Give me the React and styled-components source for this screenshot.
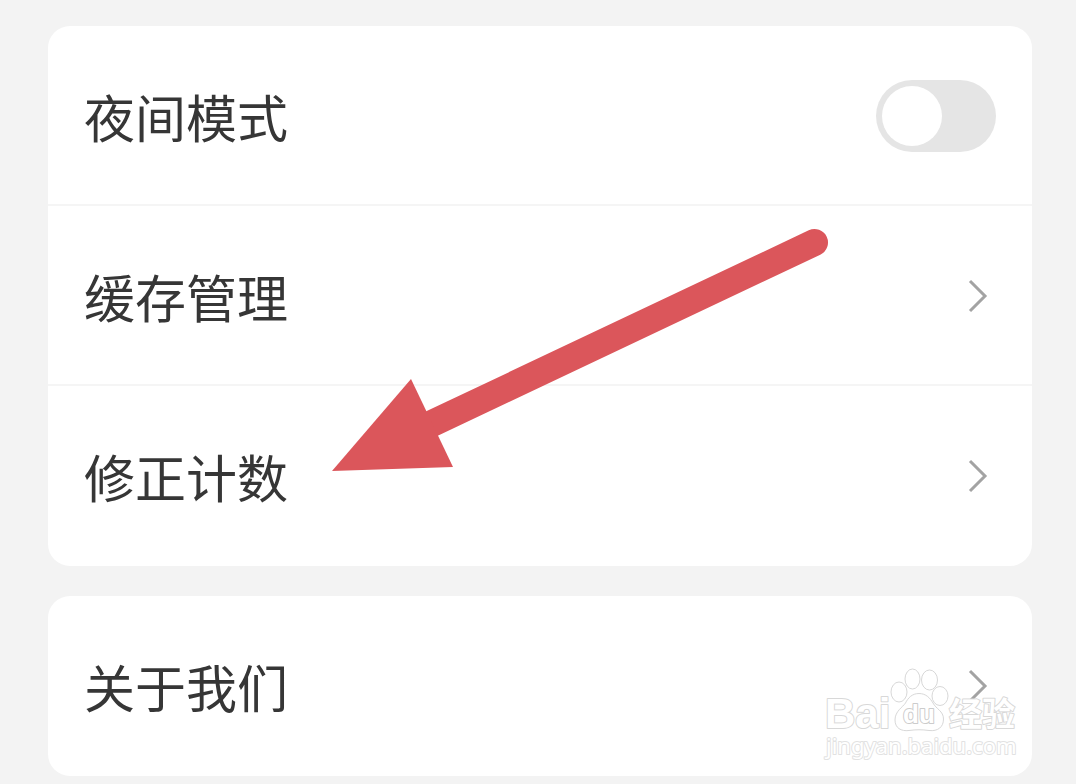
import React, { useState } from 'react'
import styled, { createGlobalStyle } from 'styled-components'

const GlobalStyle = createGlobalStyle`
* {
  box-sizing: border-box;
}
body {
  margin: 0;
  background: #f3f3f3;
  color: #363636;
  font-family: "Liberation Sans", "Noto Sans CJK SC", sans-serif;
}
`

const Chevron = () => (
  <ChevronIcon viewBox="0 0 24 36" aria-hidden="true">
    <path d="M2 3 L17 18 L2 33" />
  </ChevronIcon>
)

const Arrow = () => (
  <ArrowIcon viewBox="0 0 500 250" aria-hidden="true">
    <path d="M102 198.500 L484.500 17.500" stroke="#db565b" strokeWidth="27" strokeLinecap="round" />
    <path d="M2 246 L81 154 L123 242 Z" fill="#db565b" />
  </ArrowIcon>
)

const Watermark = () => (
  <Mark viewBox="0 0 200 98" role="img" aria-label="Baidu jingyan">
    <Brand x="3" y="64">Bai</Brand>
    <ellipse cx="77" cy="28" rx="8" ry="10" />
    <ellipse cx="90.500" cy="15" rx="7.500" ry="10" />
    <ellipse cx="107.500" cy="16" rx="8" ry="10" />
    <ellipse cx="118" cy="32" rx="8" ry="9.500" />
    <path d="M97 29.500 C90 29.500 86 34 83.500 39 C81 43 73 47 73 56 C73 64 79 67.500 87 66.500 C94 65.500 100 65.500 107 66.500 C116 67.500 121.500 63 121.500 55 C121.500 47 114 45 111 39 C108 34 104 29.500 97 29.500 Z" />
    <Du x="81" y="59">du</Du>
    <Chinese x="127" y="62">经验</Chinese>
    <Site x="4" y="90">jingyan.baidu.com</Site>
  </Mark>
)

const App = () => {
  const [night, setNight] = useState(false)

  return (
    <Page>
      <GlobalStyle />
      <Card>
        <SwitchRow>
          <Title>夜间模式</Title>
          <Toggle
            type="checkbox"
            role="switch"
            checked={night}
            onChange={() => setNight(!night)}
          />
        </SwitchRow>
        <Row type="button">
          <Title>缓存管理</Title>
          <Chevron />
        </Row>
        <Row type="button">
          <Title>修正计数</Title>
          <Chevron />
        </Row>
        <Arrow />
      </Card>
      <Card>
        <Row type="button">
          <Title>关于我们</Title>
          <Chevron />
        </Row>
        <Watermark />
      </Card>
    </Page>
  )
}

export default App

const Page = styled.main`
display: flex;
flex-direction: column;
gap: 30px;
padding: 26px 44px 8px 48px;
`
const Card = styled.section`
position: relative;
background: #ffffff;
border-radius: 22px;
`
const Row = styled.button`
display: flex;
align-items: center;
justify-content: space-between;
width: 100%;
height: 180px;
padding: 2px 40px 0 36px;
border: 0;
border-bottom: 2px solid #f5f5f5;
background: none;
color: inherit;
font: inherit;
text-align: left;
cursor: pointer;

&:last-of-type {
  border-bottom-color: transparent;
}
`
const SwitchRow = styled.label`
display: flex;
align-items: center;
justify-content: space-between;
height: 180px;
padding: 2px 36px 0;
border-bottom: 2px solid #f5f5f5;
`
const Title = styled.span`
padding-top: 10px;
font-size: 51px;
line-height: 72px;
`
const Toggle = styled.input`
appearance: none;
display: flex;
align-items: center;
width: 120px;
height: 72px;
margin: 0;
padding: 0 6px;
border-radius: 36px;
background: ${(p) => (p.checked ? '#db565b' : '#e5e5e5')};
cursor: pointer;

&::before {
  content: "";
  width: 60px;
  height: 60px;
  border-radius: 50%;
  background: #ffffff;
  margin-left: ${(p) => (p.checked ? 'auto' : '0')};
}
`
const ChevronIcon = styled.svg`
width: 24px;
height: 36px;
fill: none;
stroke: #a3a3a3;
stroke-width: 3;
`
/* pointer drawn over the rows */
const ArrowIcon = styled.svg`
position: absolute;
left: 282px;
top: 199px;
width: 500px;
height: 250px;
pointer-events: none;
`
const Mark = styled.svg`
position: absolute;
right: 10px;
bottom: 14px;
width: 200px;
height: 98px;
overflow: visible;
pointer-events: none;
fill: #ffffff;
stroke: #d8d8d8;
stroke-width: 1;
`
const MarkText = styled.text`
paint-order: stroke;
stroke-width: 2;
stroke-linejoin: round;
`
const Brand = styled(MarkText)`
font: bold 42px "Liberation Sans", sans-serif;
`
const Du = styled(MarkText)`
font: bold 26px "Liberation Sans", sans-serif;
stroke: #cccccc;
`
const Chinese = styled(MarkText)`
font: bold 33px "Noto Sans CJK SC", sans-serif;
`
const Site = styled(MarkText)`
font: 22px "Noto Sans", sans-serif;
stroke: #e2e2e2;
`
